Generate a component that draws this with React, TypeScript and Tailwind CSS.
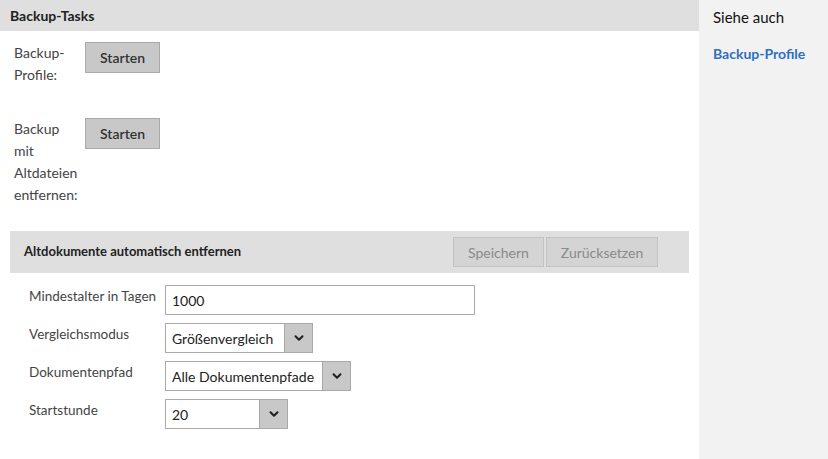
function Chevron() {
  return (
    <svg width="14" height="14" viewBox="0 0 24 24" fill="none" stroke="#222" strokeWidth="3.5" strokeLinecap="round" strokeLinejoin="round">
      <path d="M6 9l6 6 6-6" />
    </svg>
  );
}

function Select({ value, width }: { value: string; width: string }) {
  return (
    <div className={`flex h-[30px] border border-[#a9a9a9] bg-white ${width}`}>
      <div className="flex-1 px-[6px] flex items-center text-[14px] text-[#222]">{value}</div>
      <div className="w-[28px] bg-[#c8c8c8] border-l border-[#a9a9a9] flex items-center justify-center">
        <Chevron />
      </div>
    </div>
  );
}

export default function App() {
  return (
    <div className="flex w-[828px] h-[459px] bg-white text-[#333]" style={{ fontFamily: "Lato, 'Noto Sans', sans-serif" }}>
      <div className="w-[699px] flex flex-col">
        <div className="h-[31px] bg-[#dfdfdf] flex items-center px-[10px] font-bold text-[14px] text-[#222]">Backup-Tasks</div>

        <div className="flex pl-[14px] pt-[11px] gap-[11px]">
          <div className="w-[60px] text-[14px] leading-[22px] text-[#444]">Backup-<br />Profile:</div>
          <button className="w-[75px] h-[31px] bg-[#c8c8c8] border border-[#a9a9a9] text-[14px] font-semibold text-[#333]">Starten</button>
        </div>

        <div className="flex pl-[14px] pt-[32px] gap-[11px]">
          <div className="w-[60px] text-[14px] leading-[22px] text-[#444]">Backup<br />mit<br />Altdateien<br />entfernen:</div>
          <button className="w-[75px] h-[31px] bg-[#c8c8c8] border border-[#a9a9a9] text-[14px] font-semibold text-[#333]">Starten</button>
        </div>

        <div className="mx-[10px] mt-[25px] h-[42px] bg-[#dfdfdf] flex items-center pl-[14px] pr-[31px]">
          <div className="flex-1 font-bold text-[13px] text-[#222]">Altdokumente automatisch entfernen</div>
          <div className="flex gap-[2px]">
            <button className="w-[91px] h-[30px] bg-[#d4d4d4] border border-[#c2c2c2] text-[14px] text-[#8a8a8a]">Speichern</button>
            <button className="w-[112px] h-[30px] bg-[#d4d4d4] border border-[#c2c2c2] text-[14px] text-[#8a8a8a]">Zurücksetzen</button>
          </div>
        </div>

        <div className="flex flex-col gap-[8px] pl-[29px] pt-[12px] text-[13.5px] text-[#444]">
          <div className="flex">
            <div className="w-[136px] pt-[1px]">Mindestalter in Tagen</div>
            <div className="w-[310px] h-[30px] border border-[#a9a9a9] flex items-center px-[6px] text-[14px] text-[#222]">1000</div>
          </div>
          <div className="flex">
            <div className="w-[136px] pt-[1px]">Vergleichsmodus</div>
            <Select value="Größenvergleich" width="w-[148px]" />
          </div>
          <div className="flex">
            <div className="w-[136px] pt-[1px]">Dokumentenpfad</div>
            <Select value="Alle Dokumentenpfade" width="w-[186px]" />
          </div>
          <div className="flex">
            <div className="w-[136px] pt-[1px]">Startstunde</div>
            <Select value="20" width="w-[123px]" />
          </div>
        </div>
      </div>

      <div className="flex-1 bg-[#f2f2f2] pl-[14px] pt-[6px]">
        <div className="text-[15px] text-[#111]">Siehe auch</div>
        <div className="mt-[14px] text-[14px] font-bold text-[#2f6fc0]">Backup-Profile</div>
      </div>
    </div>
  );
}
